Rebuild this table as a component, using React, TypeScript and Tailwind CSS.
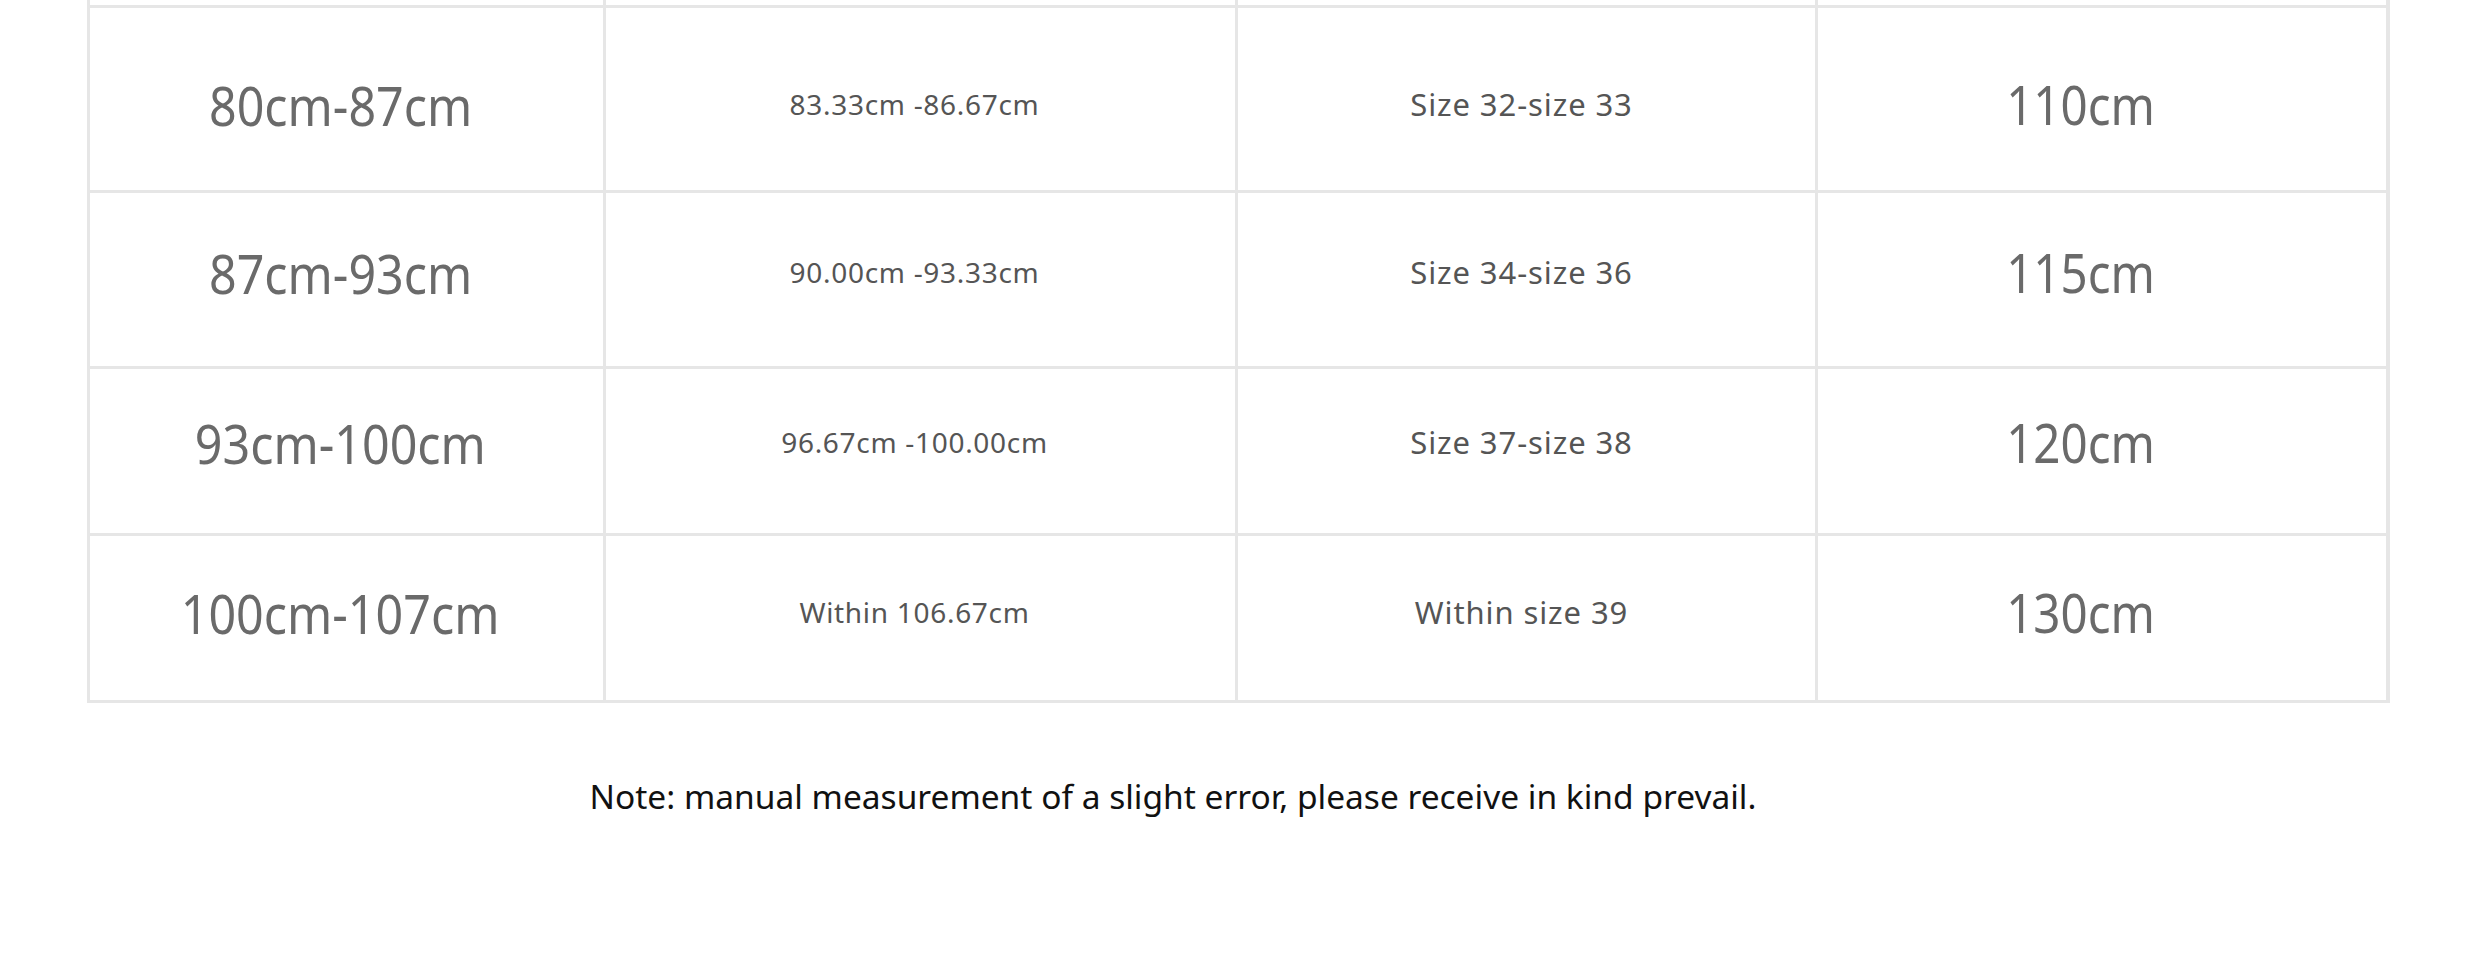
const rows = [
  { waist: '80cm-87cm', range: '83.33cm -86.67cm', size: 'Size 32-size 33', length: '110cm', pad: 'pt-[10px]' },
  { waist: '87cm-93cm', range: '90.00cm -93.33cm', size: 'Size 34-size 36', length: '115cm', pad: 'pb-[15px]' },
  { waist: '93cm-100cm', range: '96.67cm -100.00cm', size: 'Size 37-size 38', length: '120cm', pad: 'pb-[18px]' },
  { waist: '100cm-107cm', range: 'Within 106.67cm', size: 'Within size 39', length: '130cm', pad: 'pb-[12px]' },
];

export default function App() {
  return (
    <div className="w-[2480px] h-[976px] bg-white overflow-hidden font-['Noto_Sans',sans-serif]">
      {/* size table */}
      <div className="ml-[87px] w-[2303px] bg-[#e6e6e6] p-[3px] pt-0 grid grid-cols-[513px_629px_577px_568px] gap-[3px]">
        {/* tail of the row above, cut off by the screenshot */}
        <div className="h-[5px] bg-white" />
        <div className="h-[5px] bg-white" />
        <div className="h-[5px] bg-white" />
        <div className="h-[5px] bg-white" />

        {rows.map((r, i) => {
          const h = ['h-[182px]', 'h-[173px]', 'h-[164px]', 'h-[164px]'][i];
          return (
            <div key={r.waist} className="contents">
              <div className={`${h} ${r.pad} pr-[12px] bg-white flex items-center justify-center`}>
                <span className="text-[55px] leading-none text-[#6a6a6a] scale-x-[0.88] whitespace-nowrap">{r.waist}</span>
              </div>
              <div className={`${h} ${r.pad} pr-[12px] bg-white flex items-center justify-center`}>
                <span className="text-[28px] leading-none tracking-[0.7px] text-[#555555] whitespace-nowrap">{r.range}</span>
              </div>
              <div className={`${h} ${r.pad} pr-[10px] bg-white flex items-center justify-center`}>
                <span className="text-[31px] leading-none tracking-[0.9px] text-[#555555] whitespace-nowrap">{r.size}</span>
              </div>
              <div className={`${h} ${r.pad} pr-[42px] bg-white flex items-center justify-center`}>
                <span className="text-[54px] leading-none text-[#6a6a6a] scale-x-[0.88] whitespace-nowrap">{r.length}</span>
              </div>
            </div>
          );
        })}
      </div>

      <div className="flex justify-center pr-[134px] mt-[77px]">
        <p className="text-[33.5px] leading-none text-[#111111] whitespace-nowrap">
          Note: manual measurement of a slight error, please receive in kind prevail.
        </p>
      </div>
    </div>
  );
}
